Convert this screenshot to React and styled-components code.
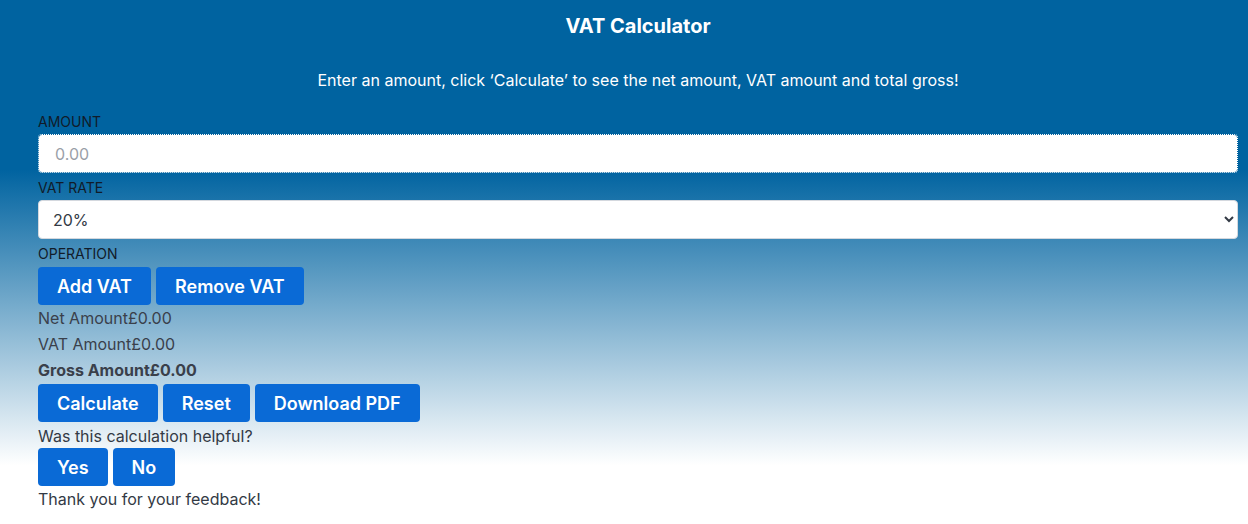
import React, { useState } from "react";
import styled, { createGlobalStyle } from "styled-components";

const GlobalStyle = createGlobalStyle`
  html, body {
    margin: 0;
    padding: 0;
  }
  body {
    font-family: Inter, "Noto Sans", sans-serif;
  }
`;

const rates = ["20%", "5%", "0%"];

const App = () => {
  const [amount, setAmount] = useState("");
  const [rate, setRate] = useState("20%");

  return (
    <Page>
      <GlobalStyle />
      <Title>VAT Calculator</Title>
      <Intro>
        Enter an amount, click ‘Calculate’ to see the net amount, VAT amount and total gross!
      </Intro>

      <Label htmlFor="amount">AMOUNT</Label>
      <AmountInput
        id="amount"
        placeholder="0.00"
        value={amount}
        onChange={(e) => setAmount(e.target.value)}
      />

      <Label htmlFor="rate" $top={7}>VAT RATE</Label>
      <RateSelect id="rate" value={rate} onChange={(e) => setRate(e.target.value)}>
        {rates.map((r) => (
          <option key={r} value={r}>{r}</option>
        ))}
      </RateSelect>

      <Label $top={7}>OPERATION</Label>
      <ButtonRow>
        <Button>Add VAT</Button>
        <Button>Remove VAT</Button>
      </ButtonRow>

      <Result>Net Amount£0.00</Result>
      <Result>VAT Amount£0.00</Result>
      <Result $bold>Gross Amount£0.00</Result>

      <ButtonRow>
        <Button>Calculate</Button>
        <Button>Reset</Button>
        <Button>Download PDF</Button>
      </ButtonRow>

      <Text $top={4}>Was this calculation helpful?</Text>
      <ButtonRow $top={2}>
        <Button>Yes</Button>
        <Button>No</Button>
      </ButtonRow>
      <Text $top={3}>Thank you for your feedback!</Text>
    </Page>
  );
};

export default App;

const Page = styled.div`
  min-height: 100vh;
  box-sizing: border-box;
  padding: 14px 10px 20px 38px;
  background: linear-gradient(to bottom, #0063a0 32%, #ffffff 88%);
  display: flex;
  flex-direction: column;
  align-items: stretch;
`;

const Title = styled.h1`
  margin: 0;
  font-size: 20px;
  line-height: 24px;
  font-weight: 700;
  color: #fff;
  text-align: center;
`;

const Intro = styled.p`
  margin: 32px 0 0;
  font-size: 16px;
  line-height: 20px;
  color: #fff;
  text-align: center;
`;

const Label = styled.label`
  display: block;
  margin: ${(p) => p.$top ?? 24}px 0 4px;
  font-size: 14px;
  line-height: 16px;
  color: #111b29;
`;

const AmountInput = styled.input`
  box-sizing: border-box;
  width: 100%;
  height: 39px;
  padding: 0 16px;
  border: 1px dotted #fff;
  background-clip: padding-box;
  border-radius: 4px;
  background-color: #fff;
  font-family: inherit;
  font-size: 16px;
  color: #333a45;
  outline: none;
  &::placeholder {
    color: #9aa0a8;
  }
`;

const RateSelect = styled.select`
  box-sizing: border-box;
  width: 100%;
  height: 39px;
  padding: 0 10px;
  border: 1px solid #d4d8de;
  border-radius: 4px;
  background: #fff;
  font-family: inherit;
  font-size: 16px;
  color: #333a45;
`;

const ButtonRow = styled.div`
  display: flex;
  gap: 5px;
  margin-top: ${(p) => p.$top ?? 1}px;
`;

const Button = styled.button`
  height: 38px;
  padding: 0 19px;
  border: none;
  border-radius: 4px;
  background: #0a6ad6;
  color: #fff;
  font-family: inherit;
  font-size: 18px;
  font-weight: 600;
  cursor: pointer;
  &:hover {
    background: #0858b4;
  }
`;

const Result = styled.div`
  font-size: 16px;
  line-height: 26px;
  color: #3a404b;
  font-weight: ${(p) => (p.$bold ? 700 : 400)};
  &:first-of-type {
    margin-top: 1px;
  }
`;

const Text = styled.div`
  margin-top: ${(p) => p.$top}px;
  font-size: 16px;
  line-height: 20px;
  color: #333a45;
`;
